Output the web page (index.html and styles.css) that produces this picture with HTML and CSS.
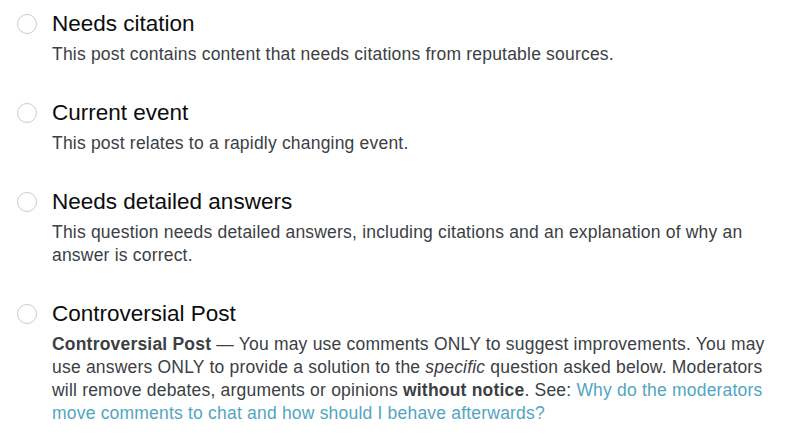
FILE: index.html
```html
<!DOCTYPE html>
<html lang="en">
<head>
<meta charset="utf-8">
<link rel="stylesheet" href="styles.css">
<title>Notices</title>
</head>
<body>
<ul class="options">
  <li class="option">
    <span class="radio"></span>
    <div class="body">
      <div class="title">Needs citation</div>
      <p class="desc">This post contains content that needs citations from reputable sources.</p>
    </div>
  </li>
  <li class="option">
    <span class="radio"></span>
    <div class="body">
      <div class="title">Current event</div>
      <p class="desc">This post relates to a rapidly changing event.</p>
    </div>
  </li>
  <li class="option">
    <span class="radio"></span>
    <div class="body">
      <div class="title">Needs detailed answers</div>
      <p class="desc">This question needs detailed answers, including citations and an explanation of why an answer is correct.</p>
    </div>
  </li>
  <li class="option">
    <span class="radio"></span>
    <div class="body">
      <div class="title">Controversial Post</div>
      <p class="desc"><b>Controversial Post</b> — You may use comments ONLY to suggest improvements. You may use answers ONLY to provide a solution to the <i>specific</i> question asked below. Moderators will remove debates, arguments or opinions <b>without notice</b>. See: <a href="#">Why do the moderators move comments to chat and how should I behave afterwards?</a></p>
    </div>
  </li>
</ul>
</body>
</html>
```
FILE: styles.css
```css
html, body {
  margin: 0;
  padding: 0;
  background: #ffffff;
}
body {
  font-family: "Liberation Sans", Arial, sans-serif;
  color: #3b4045;
}
.options {
  list-style: none;
  margin: 0;
  padding: 10px 0 0 17px;
  display: flex;
  flex-direction: column;
  gap: 33px;
  width: 768px;
}
.option {
  display: flex;
  gap: 15px;
  align-items: flex-start;
}
.radio {
  flex: none;
  box-sizing: border-box;
  width: 20px;
  height: 20px;
  border: 1px solid #c8ccd0;
  border-radius: 50%;
  background: #fff;
  margin-top: 4px;
}
.body {
  flex: 1;
  min-width: 0;
}
.title {
  font-size: 22.5px;
  line-height: 28px;
  color: #0c0d0e;
}
.desc {
  margin: 5px 0 0;
  font-size: 17.5px;
  letter-spacing: 0.2px;
  line-height: 23px;
  color: #3b4045;
}
.desc b {
  font-weight: bold;
}
.desc a {
  color: #52a5c2;
  text-decoration: none;
}
```
